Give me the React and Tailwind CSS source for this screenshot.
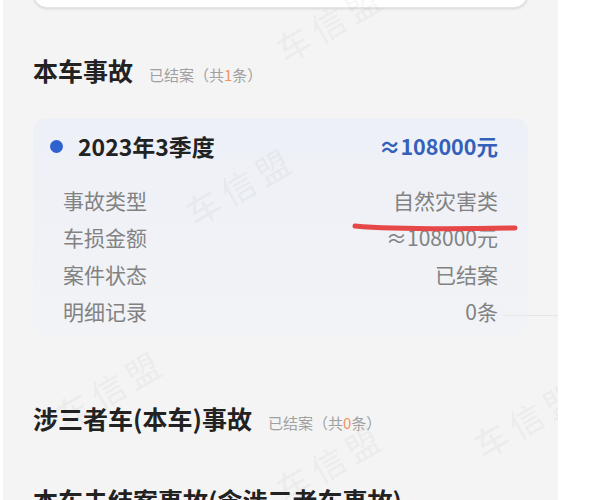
import React from 'react';

const FONT = { fontFamily: '"Noto Sans CJK SC", "Noto Sans", sans-serif' };

const rows = [
    { label: '事故类型', value: '自然灾害类' },
    { label: '车损金额', value: '≈108000元' },
    { label: '案件状态', value: '已结案' },
    { label: '明细记录', value: '0条' },
];

const marks = [
    { x: 330, y: 22 },
    { x: 240, y: 185 },
    { x: 110, y: 388 },
    { x: 330, y: 462 },
    { x: 528, y: 418 },
];

const SectionTitle = ({ title, count }) => (
    <div className="flex items-baseline gap-[16px] h-[30px] leading-[30px]">
        <span className="text-[25px] font-bold text-[#222]">{title}</span>
        <span className="text-[15px] text-[#a0a0a0]">
            已结案（共<span className="text-[#f0955c]">{count}</span>条）
        </span>
    </div>
);

export default function App() {
    return (
        <div className="w-[600px] h-[500px] bg-white overflow-hidden" style={FONT}>
            <div className="relative ml-[3px] w-[555px] h-[500px] bg-[#f4f4f4] overflow-hidden px-[30px]">
                {/* top card, mostly scrolled off */}
                <div className="-mt-[40px] h-[48px] rounded-[14px] bg-white border border-[#e6e6e6] shadow-sm" />

                <div className="mt-[47px]">
                    <SectionTitle title="本车事故" count="1" />
                </div>

                {/* accident card */}
                <div className="mt-[33px] rounded-[14px] bg-gradient-to-b from-[#edf0f7] to-[#f2f3f6] pt-[13px] pb-[6px] pl-[17px] pr-[30px]">
                    <div className="flex items-center justify-between h-[30px]">
                        <div className="flex items-center gap-[15px]">
                            <span className="w-[13px] h-[13px] rounded-full bg-[#2e62d0]" />
                            <span className="text-[23px] font-bold text-[#222]">2023年3季度</span>
                        </div>
                        <span className="text-[21.5px] font-bold text-[#3460b9]">≈108000元</span>
                    </div>
                    <div className="mt-[21px] pl-[13px]">
                        {rows.map(r => (
                            <div key={r.label} className="flex justify-between h-[37px] leading-[37px] text-[21px] text-[#828282]">
                                <span>{r.label}</span>
                                <span>{r.value}</span>
                            </div>
                        ))}
                    </div>
                </div>

                <div className="mt-[67px]">
                    <SectionTitle title="涉三者车(本车)事故" count="0" />
                </div>

                <div className="mt-[52px] h-[30px] leading-[30px] whitespace-nowrap">
                    <span className="text-[25px] font-bold text-[#222]">本车未结案事故(含涉三者车事故)</span>
                </div>

                {/* hand-drawn red underline */}
                <svg className="absolute left-[346px] top-[220px]" width="172" height="14" viewBox="0 0 172 14">
                    <path d="M6 6 C 40 9, 110 9, 166 8" stroke="#e64848" strokeWidth="5" strokeLinecap="round" fill="none" />
                </svg>

                {/* faint divider next to 0条 */}
                <div className="absolute left-[500px] top-[315px] w-[55px] h-px bg-[#e6e6e6]" />

                {/* watermarks */}
                {marks.map((m, i) => (
                    <span
                        key={i}
                        className="absolute -translate-x-1/2 -translate-y-1/2 -rotate-[30deg] whitespace-nowrap text-[34px] font-medium text-black/[0.04] tracking-[6px] pointer-events-none"
                        style={{ left: m.x - 3, top: m.y }}
                    >
                        车信盟
                    </span>
                ))}
            </div>
        </div>
    );
}
